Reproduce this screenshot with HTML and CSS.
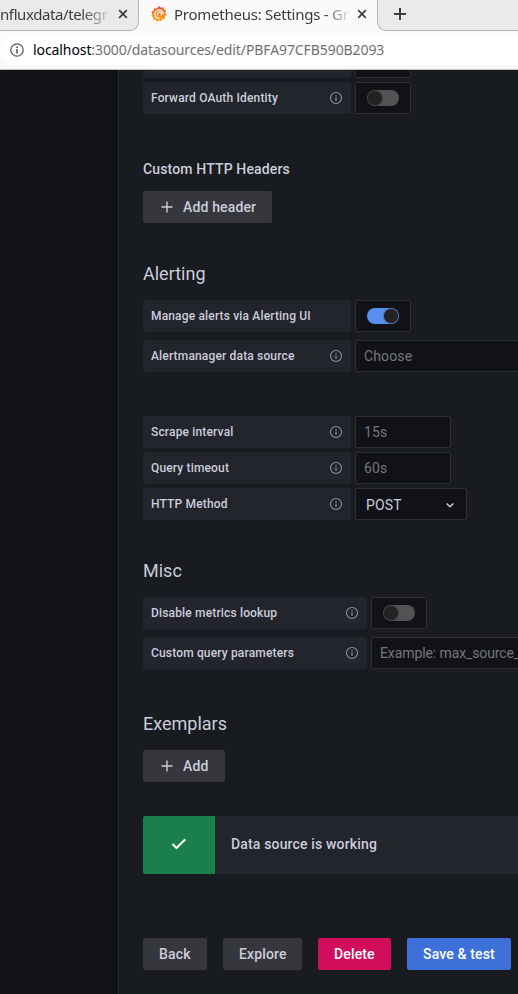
FILE: index.html
```html
<!DOCTYPE html>
<html lang="en">
<head>
<meta charset="utf-8">
<title>Prometheus: Settings - Grafana</title>
<link rel="stylesheet" href="styles.css">
</head>
<body>
<svg width="0" height="0" class="defs">
  <symbol id="info" viewBox="0 0 14 14"><circle cx="7" cy="7" r="5.5" fill="none" stroke="currentColor" stroke-width="1.1"/><path d="M7 6.4v3.3M7 4.2v1.2" stroke="currentColor" stroke-width="1.3" fill="none"/></symbol>
  <symbol id="plus" viewBox="0 0 16 16"><path d="M8 2.5v11M2.5 8h11" stroke="currentColor" stroke-width="1.4" fill="none"/></symbol>
  <symbol id="newtab" viewBox="0 0 16 16"><path d="M8 2v12M2 8h12" stroke="currentColor" stroke-width="2" fill="none"/></symbol>
  <symbol id="close" viewBox="0 0 10 10"><path d="M1.2 1.2l7.6 7.6M8.8 1.2l-7.6 7.6" stroke="currentColor" stroke-width="1.7" fill="none"/></symbol>
</svg>
<header class="browser">
  <div class="tabs">
    <div class="tab tab-left"><span class="tab-title t1">nfluxdata/telegr</span><svg class="x"><use href="#close"/></svg></div>
    <div class="tab tab-active">
      <svg class="logo" viewBox="0 0 16 16"><defs><linearGradient id="g" x1="0" y1="1" x2="0" y2="0"><stop offset="0" stop-color="#fcb21a"/><stop offset="1" stop-color="#ee4f2e"/></linearGradient></defs><path fill="url(#g)" d="M8.2 0l1.7 1.7 2.5-.4.5 2.3 2.3 1.1-.9 2.2 1.4 2-1.8 1.4.2 2.5-2.5.2-1.2 2.3-2.3-.9-2 1.4-1.4-2-2.5-.1.1-2.4L.2 9.900l1.300-2L.400 5.600l2.300-.9.300-2.500 2.600.2z"/><path d="M12.300 8.200A4.200 4.200 0 1 0 8.500 12.200M10 9.300a2 2 0 1 0-3 .1" fill="none" stroke="#fafafa" stroke-width="1.300"/></svg>
      <span class="tab-title t2">Prometheus: Settings - Gr</span><svg class="x"><use href="#close"/></svg></div>
    <div class="tab tab-new"><svg class="new"><use href="#newtab"/></svg></div>
  </div>
  <div class="toolbar"><div class="address"><svg class="site" viewBox="0 0 14 14"><circle cx="7" cy="7" r="6.200" fill="none" stroke="currentColor" stroke-width="1.300"/><path d="M7 6v4.500M7 3.500v1.600" stroke="currentColor" stroke-width="1.600"/></svg><span class="url"><b>localhost</b>:3000/datasources/edit/PBFA97CFB590B2093</span></div></div>
</header>
<div class="app">
  <aside class="side"></aside>
  <main class="content">
    <div class="row cut"><div class="label"></div><div class="box switch-box"></div></div>
    <div class="row"><div class="label">Forward OAuth Identity<svg class="info"><use href="#info"/></svg></div><div class="box switch-box"><i class="switch"></i></div></div>
    <h6>Custom HTTP Headers</h6>
    <button class="btn"><svg class="plus"><use href="#plus"/></svg>Add header</button>
    <h3 class="alerting">Alerting</h3>
    <div class="row wide-gap"><div class="label">Manage alerts via Alerting UI</div><div class="box switch-box"><i class="switch on"></i></div></div>
    <div class="row"><div class="label">Alertmanager data source<svg class="info"><use href="#info"/></svg></div><div class="box long">Choose</div></div>
    <section class="http">
      <div class="row"><div class="label">Scrape interval<svg class="info"><use href="#info"/></svg></div><div class="box input">15s</div></div>
      <div class="row"><div class="label">Query timeout<svg class="info"><use href="#info"/></svg></div><div class="box input">60s</div></div>
      <div class="row"><div class="label">HTTP Method<svg class="info"><use href="#info"/></svg></div><div class="box select">POST<svg class="chevron" viewBox="0 0 10 10"><path d="M1.700 3.500L5 6.700l3.300-3.200" fill="none" stroke="currentColor" stroke-width="1.500"/></svg></div></div>
    </section>
    <h3 class="misc">Misc</h3>
    <div class="row wide wide-gap"><div class="label">Disable metrics lookup<svg class="info"><use href="#info"/></svg></div><div class="box switch-box"><i class="switch"></i></div></div>
    <div class="row wide"><div class="label">Custom query parameters<svg class="info"><use href="#info"/></svg></div><div class="box long example">Example: max_source_</div></div>
    <h3 class="exemplars">Exemplars</h3>
    <button class="btn add"><svg class="plus"><use href="#plus"/></svg>Add</button>
    <div class="alert"><div class="status"><svg viewBox="0 0 16 14"><path d="M1.500 7l4 4L14.300 2.200" fill="none" stroke="currentColor" stroke-width="2"/></svg></div><span>Data source is working</span></div>
    <div class="actions"><button class="btn back">Back</button><button class="btn explore">Explore</button><button class="btn delete">Delete</button><button class="btn save">Save &amp; test</button></div>
  </main>
</div>
</body>
</html>
```
FILE: styles.css
```css
* { box-sizing: border-box; }
html, body { margin: 0; height: 994px; overflow: hidden; }
body { background: #111217; font-family: Roboto, sans-serif; color: #ccccdc; font-size: 14px; }
svg { display: block; flex: none; }
.defs { position: absolute; }
.browser { height: 70px; background: #fafafa; border-bottom: 1px solid #c4c4c4; font-family: "Noto Sans", sans-serif; color: #3c3c3c; overflow: hidden; }
.tabs { display: flex; height: 31px; background: #fafafa; }
.tab { display: flex; align-items: center; height: 31px; padding-bottom: 3px; white-space: nowrap; }
.tab-left { width: 139px; background: #eaeaea; border: solid #b4b4b4; border-width: 0 1px 1px 0; border-bottom-right-radius: 9px; padding-bottom: 2px; }
.tab-active { width: 238px; padding-left: 12px; }
.tab-new { flex: 1; background: #eaeaea; border: solid #b4b4b4; border-width: 0 0 1px 1px; border-bottom-left-radius: 9px; padding: 0 0 2px 14px; }
.tab-title { font-size: 15px; }
.t1 { width: 110px; letter-spacing: -.4px; -webkit-mask-image: linear-gradient(90deg, #000 82px, transparent 112px); }
.t2 { width: 175px; margin-left: 7px; letter-spacing: -.25px; -webkit-mask-image: linear-gradient(90deg, #000 150px, transparent 177px); }
.x { width: 10px; height: 10px; margin-left: 8px; }
.logo { width: 16px; height: 16px; }
.new { width: 16px; height: 16px; }
.toolbar { padding-top: 4px; }
.address { display: flex; align-items: center; height: 30px; background: #fff; border-radius: 15px 0 0 15px; padding-left: 10px; color: #5c5c5c; }
.site { width: 14px; height: 14px; }
.url { margin: -2px 0 0 9px; font-size: 14px; letter-spacing: -.09px; color: #707070; white-space: nowrap; }
.url b { font-weight: 400; color: #000; }
.app { display: flex; height: 924px; }
.side { width: 118px; flex: none; background: #111217; }
.content { flex: 1; min-width: 0; overflow: hidden; background: #181b1f; border-left: 1px solid #27292e; padding-left: 24px; }
.row { display: flex; gap: 4px; height: 32px; margin-bottom: 4px; }
.row.wide-gap { margin-bottom: 8px; }
.row.cut { height: 8px; }
.cut .box { border-top: 0; }
.label { display: flex; align-items: center; justify-content: space-between; width: 208px; flex: none; background: #22252b; border-radius: 2px; padding: 0 8px; font-size: 12px; font-weight: 500; letter-spacing: .16px; }
.wide .label { width: 224px; }
.info { width: 14px; height: 14px; color: #90919b; }
.box { display: flex; align-items: center; flex: none; border: 1px solid #2d2f34; border-radius: 2px; background: #111217; padding-left: 8px; color: #75767e; letter-spacing: .13px; white-space: nowrap; }
.switch-box { width: 56px; padding-left: 11px; }
.switch { display: flex; width: 32px; height: 16px; border-radius: 8px; background: #525252; padding: 1px; }
.switch::before { content: ""; width: 14px; height: 14px; border-radius: 50%; background: #232323; box-shadow: 0 0 2px #232323; }
.switch.on { background: #5790f0; justify-content: flex-end; }
.long { width: 300px; }
.example { letter-spacing: -.1px; }
.input { width: 96px; }
.select { width: 112px; padding: 2px 11px 0 10px; justify-content: space-between; color: #ccccdc; }
.chevron { width: 10px; height: 10px; }
h3, h6 { margin: 0; }
h6 { height: 22px; margin: 44px 0 11px; font-size: 14px; line-height: 22px; font-weight: 500; letter-spacing: .15px; }
h3 { height: 22px; font-size: 18px; line-height: 22px; font-weight: 400; margin-bottom: 15px; letter-spacing: 0; }
h3.alerting { margin-top: 40px; }
h3.misc { margin-top: 40px; }
h3.exemplars { margin-top: 44px; }
.http { padding-top: 40px; }
.btn { display: flex; align-items: center; height: 32px; border: 0; border-radius: 2px; padding: 0 16px; background: #35373c; color: #ccccdc; font: 500 14px Roboto, sans-serif; letter-spacing: .15px; white-space: nowrap; }
.plus { width: 16px; height: 16px; margin-right: 8px; }
.add { width: 82px; }
.alert { display: flex; height: 58px; margin-top: 34px; background: #22252b; align-items: center; border-radius: 2px 0 0 2px; overflow: hidden; font-weight: 500; letter-spacing: .16px; }
.alert span { padding-bottom: 2px; }
.status { display: flex; align-items: center; justify-content: center; width: 72px; height: 58px; background: #1a7f4b; color: #fff; margin-right: 16px; }
.status svg { width: 16px; height: 14px; margin-bottom: 2px; }
.actions { display: flex; gap: 16px; margin-top: 64px; }
.back { width: 64px; }
.explore { width: 79px; }
.delete { width: 73px; background: #d10e5c; color: #fff; }
.save { width: 104px; background: #3d71d9; color: #fff; }
```
